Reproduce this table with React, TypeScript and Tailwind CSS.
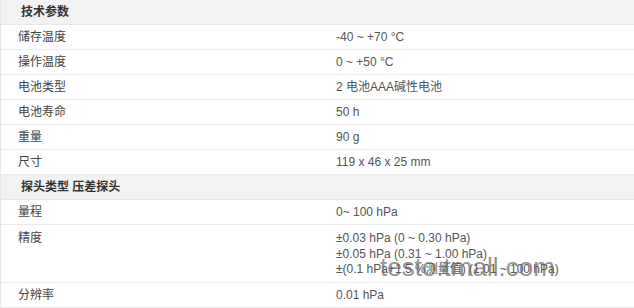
const font = { fontFamily: '"Liberation Sans", Arial, "Noto Sans CJK SC", sans-serif' };

type Row = { label: string; value: string[] } | { head: string };

const rows: Row[] = [
  { head: "技术参数" },
  { label: "储存温度", value: ["-40 ~ +70 °C"] },
  { label: "操作温度", value: ["0 ~ +50 °C"] },
  { label: "电池类型", value: ["2 电池AAA碱性电池"] },
  { label: "电池寿命", value: ["50 h"] },
  { label: "重量", value: ["90 g"] },
  { label: "尺寸", value: ["119 x 46 x 25 mm"] },
  { head: "探头类型 压差探头" },
  { label: "量程", value: ["0~ 100 hPa"] },
  {
    label: "精度",
    value: [
      "±0.03 hPa (0 ~ 0.30 hPa)",
      "±0.05 hPa (0.31 ~ 1.00 hPa)",
      "±(0.1 hPa+1.5 %测量值) (1.01 ~ 100 hPa)",
    ],
  },
  { label: "分辨率", value: ["0.01 hPa"] },
];

export default function App() {
  return (
    <div
      className="relative w-[634px] h-[308px] overflow-hidden bg-white text-[12px] border-l border-[#e6e6e6]"
      style={font}
    >
      {rows.map((r, i) =>
        "head" in r ? (
          <div
            key={i}
            className="h-[25px] flex items-center pl-[20px] bg-[#f2f2f2] border-b border-[#e8e8e8] font-bold text-[#333]"
          >
            {r.head}
          </div>
        ) : (
          <div
            key={i}
            className={`grid grid-cols-[319px_1fr] border-b border-[#ebebeb] ${
              r.value.length > 1 ? "h-[58px]" : "h-[25px]"
            }`}
          >
            <div
              className={`pl-[17px] text-[#444] ${
                r.value.length > 1 ? "pt-[6px] leading-[15.5px]" : "flex items-center"
              }`}
            >
              {r.label}
            </div>
            <div
              className={`pl-[16px] text-[#555] ${
                r.value.length > 1 ? "pt-[6px] leading-[15.5px]" : "flex items-center"
              }`}
            >
              {r.value.map((v, j) => (
                <div key={j}>{v}</div>
              ))}
            </div>
          </div>
        )
      )}
      <div className="absolute left-[379px] top-[254px] text-[26px] leading-none text-[#666]/70 pointer-events-none">
        testo.tmall.com
      </div>
    </div>
  );
}
